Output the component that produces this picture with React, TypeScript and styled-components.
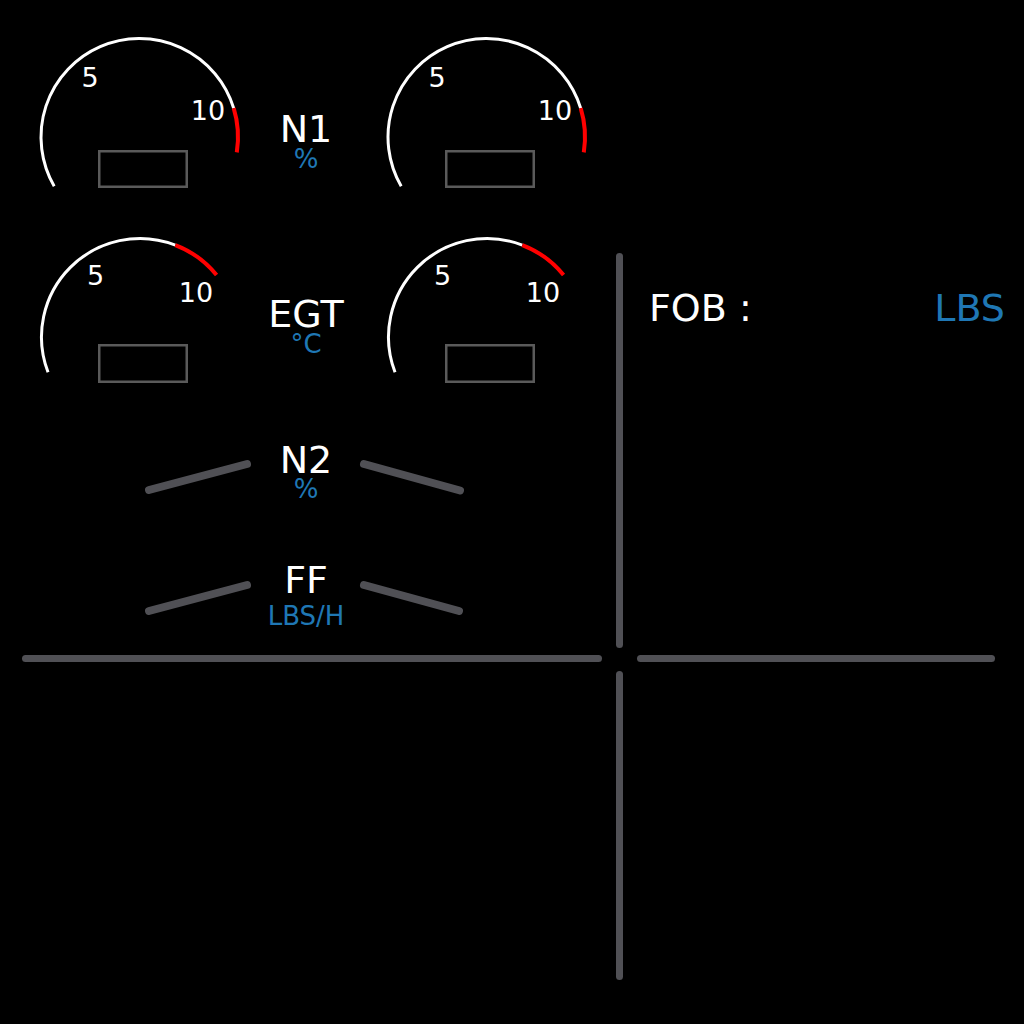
import React from "react";
import styled, { createGlobalStyle } from "styled-components";

const WHITE = "#ffffff";
const BLUE = "#1f77b4";
const RED = "#ff0000";
const LINE_GREY = "#505055";
const BOX_GREY = "#5a5a5a";

const GlobalStyle = createGlobalStyle`
  html, body { margin: 0; padding: 0; background: #000; }
  body { font-family: "DejaVu Sans", "Noto Sans", sans-serif; }
`;

const Screen = styled.main`
  width: 1024px;
  height: 1024px;
  background: #000;
  display: grid;
  grid-template-columns: 616px 7px 401px;
  grid-template-rows: 655px 7px 362px;
  overflow: hidden;
  font-family: "DejaVu Sans", "Noto Sans", sans-serif;
`;

const EnginePanel = styled.section`
  grid-column: 1;
  grid-row: 1;
  display: flex;
  flex-direction: column;
  padding-top: 30px;
`;

const ParamRow = styled.div<{ $height: number; $gap: number }>`
  display: grid;
  grid-template-columns: 215px 112px 1fr;
  height: ${(p) => p.$height}px;
  margin-top: ${(p) => p.$gap}px;
  padding-left: 35px;
`;

const RightSlot = styled.div<{ $shift: number }>`
  padding-left: ${(p) => p.$shift}px;
`;

const ParamLabel = styled.div<{ $top: number }>`
  display: flex;
  flex-direction: column;
  align-items: center;
  padding-top: ${(p) => p.$top}px;
`;

const ParamName = styled.span`
  font-size: 38px;
  line-height: 38px;
  color: ${WHITE};
  white-space: nowrap;
`;

const ParamUnit = styled.span<{ $shift: number }>`
  font-size: 26px;
  line-height: 20px;
  color: ${BLUE};
  margin-top: ${(p) => p.$shift}px;
  white-space: nowrap;
`;

const InstrumentSvg = styled.svg`
  display: block;
  overflow: visible;
`;

const ScaleText = styled.text`
  font-family: "DejaVu Sans", "Noto Sans", sans-serif;
  font-size: 27px;
  fill: ${WHITE};
`;

const FuelPanel = styled.section`
  grid-column: 3;
  grid-row: 1;
  display: flex;
  justify-content: space-between;
  align-items: flex-start;
  padding: 289px 19px 0 26px;
  font-size: 38px;
  line-height: 38px;
`;

const FuelLabel = styled.span`
  color: ${WHITE};
  white-space: pre;
`;

const FuelUnit = styled.span`
  color: ${BLUE};
`;

const DividerV = styled.div<{ $row: number; $top: number; $bottom: number }>`
  grid-column: 2;
  grid-row: ${(p) => p.$row};
  margin: ${(p) => p.$top}px 0 ${(p) => p.$bottom}px;
  background: ${LINE_GREY};
  border-radius: 4px;
`;

const DividerH = styled.div<{ $col: number; $left: number; $right: number }>`
  grid-row: 2;
  grid-column: ${(p) => p.$col};
  margin: 0 ${(p) => p.$right}px 0 ${(p) => p.$left}px;
  background: ${LINE_GREY};
  border-radius: 4px;
`;

type Mark = { text: string; x: number; y: number };
type GaugeSpec = {
  height: number;
  cx: number;
  cy: number;
  r: number;
  start: number;
  redStart: number;
  end: number;
  box: { x: number; y: number; w: number; h: number };
  marks: Mark[];
};

const pt = (cx: number, cy: number, r: number, a: number) => [
  cx + r * Math.cos((a * Math.PI) / 180),
  cy + r * Math.sin((a * Math.PI) / 180),
];

const arc = (cx: number, cy: number, r: number, a0: number, a1: number) => {
  const [x0, y0] = pt(cx, cy, r, a0);
  const [x1, y1] = pt(cx, cy, r, a1);
  const large = a1 - a0 > 180 ? 1 : 0;
  return `M${x0.toFixed(2)} ${y0.toFixed(2)} A${r} ${r} 0 ${large} 1 ${x1.toFixed(2)} ${y1.toFixed(2)}`;
};

const Gauge: React.FC<{ spec: GaugeSpec }> = ({ spec }) => (
  <InstrumentSvg width={215} height={spec.height} viewBox={`0 0 215 ${spec.height}`}>
    <path d={arc(spec.cx, spec.cy, spec.r, spec.start, spec.redStart)} fill="none" stroke={WHITE} strokeWidth={3} />
    <path d={arc(spec.cx, spec.cy, spec.r, spec.redStart, spec.end)} fill="none" stroke={RED} strokeWidth={4} />
    {spec.marks.map((m) => (
      <ScaleText key={m.text} x={m.x} y={m.y} textAnchor="middle">
        {m.text}
      </ScaleText>
    ))}
    <rect x={spec.box.x} y={spec.box.y} width={spec.box.w} height={spec.box.h} fill="none" stroke={BOX_GREY} strokeWidth={2.5} />
  </InstrumentSvg>
);

const Dash: React.FC<{ height: number; x1: number; y1: number; x2: number; y2: number }> = ({ height, x1, y1, x2, y2 }) => (
  <InstrumentSvg width={215} height={height} viewBox={`0 0 215 ${height}`}>
    <line x1={x1} y1={y1} x2={x2} y2={y2} stroke={LINE_GREY} strokeWidth={8} strokeLinecap="round" />
  </InstrumentSvg>
);

const N1_GAUGE: GaugeSpec = {
  height: 165,
  cx: 104.5,
  cy: 107,
  r: 98.5,
  start: 150,
  redStart: 343,
  end: 369,
  box: { x: 64.25, y: 121.25, w: 87.5, h: 35.5 },
  marks: [
    { text: "5", x: 55, y: 57 },
    { text: "10", x: 173, y: 90 },
  ],
};

const EGT_GAUGE: GaugeSpec = {
  height: 160,
  cx: 105,
  cy: 107,
  r: 98.5,
  start: 159,
  redStart: 291,
  end: 321,
  box: { x: 64.25, y: 115.25, w: 87.5, h: 36.5 },
  marks: [
    { text: "5", x: 60.5, y: 55 },
    { text: "10", x: 161, y: 72 },
  ],
};

export default function App() {
  return (
    <>
      <GlobalStyle />
      <Screen>
        <EnginePanel>
          <ParamRow $height={165} $gap={0}>
            <Gauge spec={N1_GAUGE} />
            <ParamLabel $top={80}>
              <ParamName>N1</ParamName>
              <ParamUnit $shift={1}>%</ParamUnit>
            </ParamLabel>
            <RightSlot $shift={20}>
              <Gauge spec={N1_GAUGE} />
            </RightSlot>
          </ParamRow>

          <ParamRow $height={160} $gap={35}>
            <Gauge spec={EGT_GAUGE} />
            <ParamLabel $top={65}>
              <ParamName>EGT</ParamName>
              <ParamUnit $shift={1}>°C</ParamUnit>
            </ParamLabel>
            <RightSlot $shift={20}>
              <Gauge spec={EGT_GAUGE} />
            </RightSlot>
          </ParamRow>

          <ParamRow $height={80} $gap={40}>
            <Dash height={80} x1={114} y1={60} x2={212} y2={34} />
            <ParamLabel $top={11}>
              <ParamName>N2</ParamName>
              <ParamUnit $shift={0}>%</ParamUnit>
            </ParamLabel>
            <RightSlot $shift={0}>
              <Dash height={80} x1={2} y1={34} x2={98} y2={60.5} />
            </RightSlot>
          </ParamRow>

          <ParamRow $height={80} $gap={40}>
            <Dash height={80} x1={114} y1={61} x2={212} y2={35} />
            <ParamLabel $top={11}>
              <ParamName>FF</ParamName>
              <ParamUnit $shift={7}>LBS/H</ParamUnit>
            </ParamLabel>
            <RightSlot $shift={0}>
              <Dash height={80} x1={2} y1={35} x2={97} y2={61} />
            </RightSlot>
          </ParamRow>
        </EnginePanel>

        <DividerV $row={1} $top={253} $bottom={7} />

        <FuelPanel>
          <FuelLabel>FOB :</FuelLabel>
          <FuelUnit>LBS</FuelUnit>
        </FuelPanel>

        <DividerH $col={1} $left={22} $right={14} />
        <DividerH $col={3} $left={14} $right={29} />

        <DividerV $row={3} $top={9} $bottom={44} />
      </Screen>
    </>
  );
}
